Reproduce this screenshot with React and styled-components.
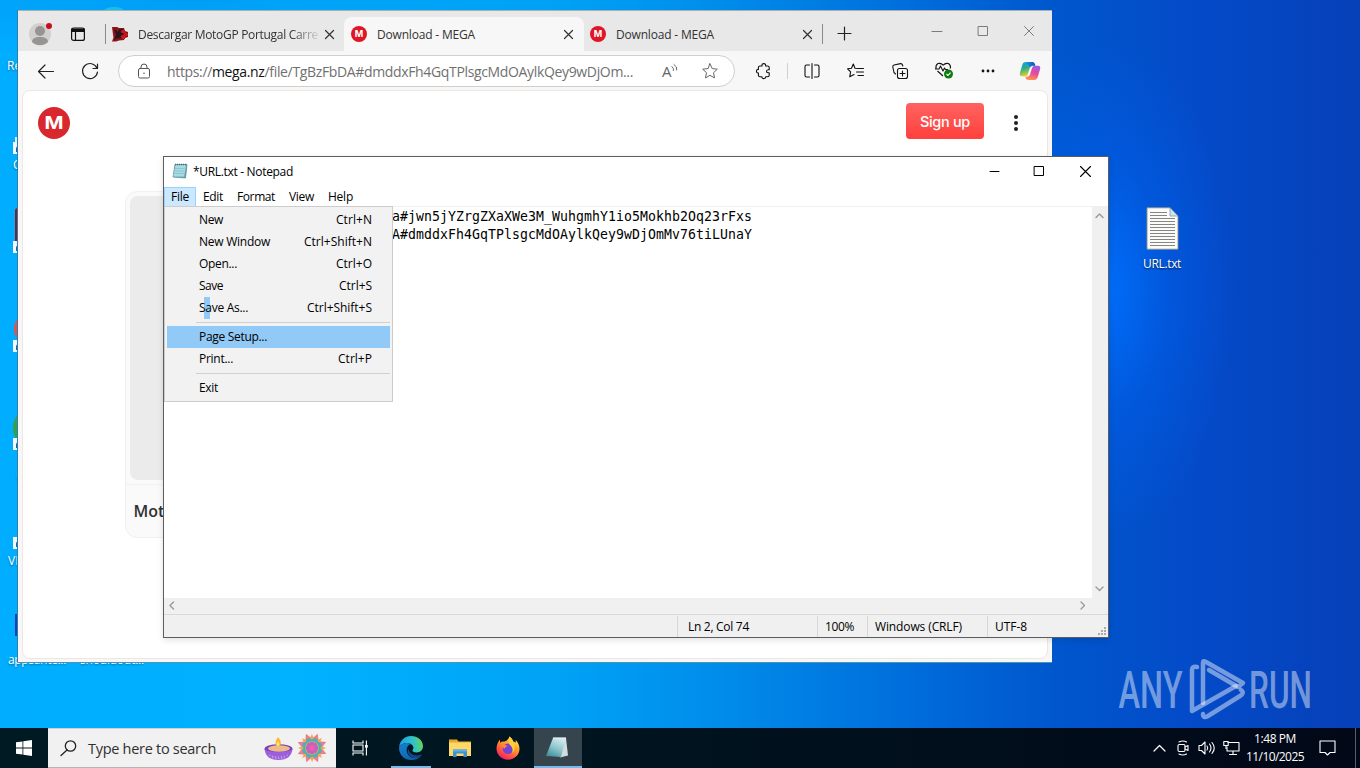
import React, { useLayoutEffect, useRef } from "react";
import styled, { createGlobalStyle, css } from "styled-components";

const Global = createGlobalStyle`
  * { box-sizing: border-box; }
  html, body { margin: 0; padding: 0; overflow: hidden; }
  body { font-family: "Open Sans", "Noto Sans", sans-serif; font-size: 12px; color: #000; }
  svg { display: block; flex: none; overflow: visible; }
`;

/* ---------- text that is tracked to a fixed advance ---------- */
const Run = styled.span`
  display: inline-block;
  white-space: pre;
  flex: none;
`;
function Fit({ w, children, className }) {
  const ref = useRef(null);
  useLayoutEffect(() => {
    const el = ref.current;
    el.style.letterSpacing = "0px";
    const natural = el.getBoundingClientRect().width;
    const gap = (w - natural) / el.textContent.length;
    el.style.letterSpacing = gap.toFixed(3) + "px";
  }, [w]);
  return <Run ref={ref} className={className}>{children}</Run>;
}

/* ---------- desktop ---------- */
const Screen = styled.div`
  position: relative;
  width: 1360px;
  height: 768px;
  overflow: hidden;
  display: flex;
  flex-direction: column;
  justify-content: flex-end;
  background:
    radial-gradient(ellipse 130px 250px at 1105px 290px, rgba(0,112,255,.9), rgba(0,100,245,.4) 50%, rgba(0,90,230,0) 100%),
    radial-gradient(ellipse 420px 60px at 200px 0, rgba(0,140,235,.5), rgba(0,140,235,0)),
    linear-gradient(90deg, #00adff 0, #00b2ff 300px, #00a2f6 560px, #008cea 720px, #006ada 930px, #0056cc 1060px, #044ac8 1200px, #0640b8 1360px);
`;
const Shortcut = styled.div`
  position: absolute;
  left: ${p => p.$x}px;
  top: ${p => p.$y}px;
  color: #fff;
  font-size: 12px;
  line-height: 16px;
  text-shadow: 0 1px 2px rgba(0,0,0,.4);
`;
const Piece = styled.div`
  position: absolute;
  left: ${p => p.$x}px;
  top: ${p => p.$y}px;
  width: ${p => p.$w}px;
  height: ${p => p.$h}px;
  background: ${p => p.$c};
  border-radius: ${p => p.$r || 0}px;
`;
const Badge = styled.div`
  position: absolute;
  left: 13px;
  top: ${p => p.$y}px;
  width: 12px;
  height: 12px;
  background: #f4f8fb;
  &::after { content: ""; position: absolute; left: 3px; top: 4px; width: 6px; height: 6px; background: #285c9c; border-radius: 3px 0 0 0; }
`;
const FileIcon = styled.div`
  position: absolute;
  left: 1125px;
  top: 207px;
  width: 74px;
  display: flex;
  flex-direction: column;
  align-items: center;
  gap: 5px;
  color: #fff;
  line-height: 18px;
  text-shadow: 0 1px 2px rgba(0,0,0,.7);
`;
const Watermark = styled.div`
  position: absolute;
  left: 1115px;
  top: 655px;
`;

/* ---------- browser ---------- */
const Browser = styled.section`
  position: absolute;
  left: 18px;
  top: 10px;
  width: 1034px;
  height: 652px;
  display: flex;
  flex-direction: column;
  background: #f7f7f7;
  border-top: 1px solid #a9b0b5;
  box-shadow: -1px 0 0 #287fb0, 0 1px 0 #4b94b8;
`;
const TabStrip = styled.div`
  display: flex;
  height: 40px;
  background: #e8e8e8;
  flex: none;
  align-items: flex-end;
`;
const StripStart = styled.div`
  width: 89px;
  height: 39px;
  padding: 7px 0 0 10px;
  display: flex;
  gap: 19px;
`;
const Tab = styled.div`
  width: ${p => p.$w}px;
  height: 34px;
  display: flex;
  align-items: center;
  padding: 0 ${p => p.$end || 11}px 0 ${p => p.$pad}px;
  color: #333;
  font-size: 12px;
  border-radius: 8px 8px 0 0;
  background: ${p => (p.$active ? "#f7f7f7" : "transparent")};
`;
const TabTitle = styled.div`
  flex: 1;
  margin-left: ${p => p.$gap}px;
  overflow: hidden;
  white-space: nowrap;
  ${p => p.$fade && css`-webkit-mask-image: linear-gradient(90deg, #000 82%, transparent 98%);`}
`;
const Divider = styled.div`
  width: 1px;
  height: ${p => p.$h}px;
  background: ${p => p.$c};
  flex: none;
  margin: ${p => p.$m || 0};
`;
const Captions = styled.div`
  margin-left: auto;
  height: 39px;
  display: flex;
  padding: 14px 18px 0 0;
  gap: 36px;
`;
const Toolbar = styled.div`
  display: flex;
  align-items: center;
  height: 39px;
  flex: none;
  padding-left: 18px;
`;
const Address = styled.div`
  width: 617px;
  height: 32px;
  margin-left: 18px;
  border: 1px solid #cfcfcf;
  border-radius: 16px;
  background: #fff;
  display: flex;
  align-items: center;
  padding: 0 0 0 17px;
  font-size: 14px;
  color: #707070;
  b { font-weight: 400; color: #111; }
`;
const Url = styled.div`
  width: 495px;
  margin-left: 15px;
  padding-top: 1px;
`;
const Tools = styled.div`
  width: 317px;
  padding-left: 8px;
  display: grid;
  grid-template-columns: 41px 7px 41px 46px 43px 46px 42px 41px;
  align-items: center;
  justify-items: center;
`;
const Page = styled.main`
  flex: 1;
  margin: 0 4px 3px;
  background: #fff;
  border: 1px solid #f0e6e0;
  border-radius: 8px;
  display: flex;
  flex-direction: column;
`;
const PageHeader = styled.header`
  display: flex;
  height: 100px;
  padding: 12px 25px 0 15px;
  justify-content: space-between;
`;
const HeaderActions = styled.div`
  display: flex;
  gap: 24px;
`;
const SignUp = styled.div`
  width: 78px;
  height: 36px;
  border-radius: 4px;
  display: flex;
  align-items: center;
  justify-content: center;
  color: #fff;
  font: 500 14.5px Inter, sans-serif;
  background: linear-gradient(#ff6360, #ff403d);
`;
const Card = styled.div`
  margin-left: 102px;
  width: 400px;
  height: 347px;
  border: 1px solid #f1f1f1;
  border-radius: 12px;
  background: #fafafa;
  overflow: hidden;
`;
const Preview = styled.div`
  height: 293px;
  border-bottom: 1px solid #f1f1f1;
  padding: 4px;
  &::before { content: ""; display: block; height: 284px; background: #ebebeb; border-radius: 8px; }
`;
const CardName = styled.div`
  padding: 15px 0 0 7.5px;
  font-size: 16px;
  font-weight: 600;
  line-height: 22px;
  color: #303233;
`;

/* ---------- notepad ---------- */
const Notepad = styled.section`
  position: absolute;
  left: 163px;
  top: 156px;
  width: 946px;
  height: 482px;
  border: 1px solid #5d5d5d;
  background: #fff;
  display: flex;
  flex-direction: column;
  box-shadow: 0 2px 6px rgba(0,0,0,.12);
`;
const TitleBar = styled.div`
  height: 30px;
  flex: none;
  display: flex;
  align-items: center;
  padding: 0 17.5px 2px 8px;
  gap: 5px;
`;
const TitleButtons = styled.div`
  margin-left: auto;
  display: flex;
  gap: 34.5px;
`;
const MenuBar = styled.div`
  height: 20px;
  flex: none;
  display: flex;
  border-bottom: 1px solid #f0f0f0;
`;
const MenuHead = styled.div`
  padding: 0 7px;
  height: 20px;
  line-height: 20px;
  ${p => p.$open && css`
    background: #cce8ff;
    box-shadow: inset 0 0 0 1px #99d1ff;
  `}
`;
const Editor = styled.div`
  flex: 1;
  display: flex;
`;
const Document = styled.div`
  flex: 1;
  padding: 1px 0 0 228px;
  font-family: "DejaVu Sans Mono", monospace;
  font-size: 13.2px;
  line-height: 18px;
`;
const VScroll = styled.div`
  width: 16px;
  background: #f0f0f0;
  display: flex;
  flex-direction: column;
  justify-content: space-between;
  align-items: center;
  padding: 5px 2px 6px 0;
`;
const HScroll = styled.div`
  height: 16px;
  background: #f0f0f0;
  display: flex;
  align-items: center;
  justify-content: space-between;
  padding: 0 22px 2px 4px;
  flex: none;
`;
const StatusBar = styled.div`
  height: 23px;
  flex: none;
  border-top: 1px solid #d9d9d9;
  background: #f0f0f0;
  display: flex;
  padding-left: 513px;
`;
const StatusCell = styled.div`
  width: ${p => p.$w}px;
  height: 21px;
  margin-top: 1px;
  border-left: 1px solid #d7d7d7;
  padding-left: ${p => p.$pad}px;
  line-height: 20px;
  display: flex;
  justify-content: space-between;
  align-items: flex-end;
`;
const Menu = styled.div`
  position: absolute;
  left: 164px;
  top: 206px;
  width: 229px;
  height: 196px;
  background: #f2f2f2;
  border: 1px solid #ccc;
  padding: 2px;
`;
const MenuItem = styled.div`
  height: 22px;
  display: flex;
  align-items: center;
  justify-content: space-between;
  padding: 0 18px 1px 32px;
  background: ${p =>
    p.$hot ? "#91c9f7" : p.$sliver ? "linear-gradient(90deg, transparent 37px, #91c9f7 37px, #91c9f7 43px, transparent 43px)" : "transparent"};
`;
const Rule = styled.div`
  height: 1px;
  margin: 3px 0 3px 29px;
  background: #d0d0d0;
`;

/* ---------- taskbar ---------- */
const Taskbar = styled.footer`
  position: relative;
  height: 40px;
  flex: none;
  display: flex;
  background: linear-gradient(90deg, #001a24, #00141f 45%, #020818 100%);
  color: #fff;
`;
const Start = styled.div`
  width: 48px;
  display: flex;
  align-items: center;
  justify-content: center;
`;
const Search = styled.div`
  width: 288px;
  background: #f1f1f1;
  border-top: 1px solid #ccd3d7;
  border-bottom: 1px solid #b5b5b5;
  display: flex;
  align-items: center;
  padding-left: 12px;
  color: #303030;
  font-size: 14.5px;
`;
const SearchLabel = styled.div`
  width: 176px;
  margin-left: 11px;
`;
const TaskButton = styled.div`
  width: ${p => p.$w || 49}px;
  display: flex;
  align-items: center;
  justify-content: center;
  padding-right: ${p => p.$nudge || 0}px;
  background:
    ${p => p.$running ? `linear-gradient(#76b9ed, #76b9ed) center bottom / ${p.$active ? 48 : 40}px 2px no-repeat` : "none"}
    ${p => (p.$active ? ", #36454d" : "")};
`;
const Tray = styled.div`
  margin-left: auto;
  display: flex;
  align-items: center;
`;
const TrayIcons = styled.div`
  display: flex;
  align-items: center;
  gap: 7px;
  margin-right: 6px;
`;
const Clock = styled.div`
  width: 58px;
  display: flex;
  flex-direction: column;
  align-items: center;
  line-height: 18px;
`;
const Notify = styled.div`
  width: 52px;
  height: 40px;
  padding-left: 15px;
  display: flex;
  align-items: center;
  border-right: 1px solid #57606a;
  margin-right: 4px;
`;

/* ---------- icons ---------- */
const Line = ({ w = 16, h = w, vb, c = "#222", sw = 1, children }) => (
  <svg width={w} height={h} viewBox={vb || `0 0 ${w} ${h}`} fill="none" stroke={c} strokeWidth={sw} strokeLinecap="round" strokeLinejoin="round">
    {children}
  </svg>
);
const Cross = ({ s = 9, c = "#333", sw = 1.2 }) => (
  <Line w={s} c={c} sw={sw}><path d={`M.5.5l${s - 1} ${s - 1}M${s - 0.5}.5L.5 ${s - 0.5}`} /></Line>
);
const Mega = ({ s, fill }) => (
  <svg width={s} height={s} viewBox="0 0 32 32">
    <circle cx="16" cy="16" r="16" fill={fill} />
    <text x="16" y="22" textAnchor="middle" fontFamily="Inter, sans-serif" fontWeight="700" fontSize="17" textLength="17" lengthAdjust="spacingAndGlyphs" fill="#fff">M</text>
  </svg>
);
const Avatar = () => (
  <svg width="24" height="30" viewBox="0 0 24 30">
    <circle cx="12" cy="15" r="11" fill="#d2d0ce" />
    <circle cx="12" cy="12" r="5" fill="#979593" />
    <path d="M4 23c0-3.500 3-5 8-5s8 1.500 8 5c-1.600 2-4.500 3.200-8 3.200S5.600 25 4 23z" fill="#979593" />
    <circle cx="21" cy="7" r="3" fill="#c50f1f" />
  </svg>
);
const GameFav = () => (
  <svg width="16" height="16" viewBox="0 0 16 16">
    <path d="M0 1h5l2 1h5l1 3 3 1v5l-3 1-1 2-5 .5-3 1H0l1.500-4-.5-3z" fill="#8e1219" />
    <path d="M1.500 2.500L6 6l1-2.500 4.500-.5L9 6.500l4 1.300-4 1.400 1 3.300-4.500-.5L2 14l2.200-5.500z" fill="#241617" />
    <path d="M10 4h3v2.500l3 1v2l-3 1V13h-3l-1.500-3 3-2-3-2z" fill="#c8161c" />
    <path d="M9 7l3.500 1L9 9.500z" fill="#241617" />
  </svg>
);
const Chevron = ({ d, c = "#9a9a9a" }) => {
  const p = { up: "M1 5.500L4.500 2 8 5.500", down: "M1 2l3.500 3.500L8 2", left: "M5.500 1L2 4.500 5.500 8", right: "M2 1l3.500 3.500L2 8" }[d];
  const v = d === "up" || d === "down";
  return <Line w={v ? 9 : 7} h={v ? 7 : 9} c={c} sw={1.4}><path d={p} /></Line>;
};
const NoteIcon = () => (
  <svg width="16" height="16" viewBox="0 0 16 16">
    <path d="M3 1.500h12l-1.500 13.500-12.500-1z" fill="#6fabb7" stroke="#4b7f88" strokeWidth=".7" />
    <path d="M3.500 2h10.500l-2 11.500H1.200z" fill="#a7dbe2" />
    <path d="M3 5.500h9.500M2.600 8h9.500M2.200 10.500h9.500" stroke="#7fbdc8" strokeWidth=".7" />
    <path d="M3 1.500h12" stroke="#52666b" strokeWidth="1.600" strokeDasharray="1 1" />
  </svg>
);
const Copilot = () => (
  <svg width="22" height="20" viewBox="0 0 24 22">
    <defs>
      <linearGradient id="cpA" x1="0" y1="0" x2=".3" y2="1"><stop offset="0" stopColor="#1698e8" /><stop offset=".5" stopColor="#2baf8b" /><stop offset="1" stopColor="#e8cf2e" /></linearGradient>
      <linearGradient id="cpB" x1=".6" y1="0" x2=".3" y2="1"><stop offset="0" stopColor="#9f5ae8" /><stop offset=".5" stopColor="#ea4b93" /><stop offset="1" stopColor="#ff9a50" /></linearGradient>
      <linearGradient id="cpC" x1="0" y1="0" x2="1" y2="0"><stop offset="0" stopColor="#1698e8" /><stop offset="1" stopColor="#1b48b5" /></linearGradient>
    </defs>
    <path d="M7.500 1H14c2 0 2.600 1.500 3.200 3.600h-1.800c-2 0-3 1-3.600 3l-2 6.400c-.6 2-1.600 2.800-3.400 2.800H3.200C.8 16.800.3 15 1 12.600L3.600 4C4.300 1.800 5.500 1 7.500 1z" fill="url(#cpA)" />
    <path d="M16.600 21H10c-2 0-2.600-1.500-3.200-3.600h1.800c2 0 3-1 3.600-3l2-6.400c.6-2 1.600-2.800 3.400-2.800H20.800c2.400 0 2.900 1.800 2.200 4.200L20.400 18c-.7 2.200-1.800 3-3.800 3z" fill="url(#cpB)" />
    <path d="M8 1h6.500c2 0 2.800 1.800 3.500 4.200h-2.600c-1.500 0-2.700.6-3.300 2z" fill="url(#cpC)" />
  </svg>
);
const WinLogo = () => (
  <svg width="16" height="16" viewBox="0 0 16 16" fill="#fff">
    <path d="M0 2.300l6.500-.9v6.100H0zM7.300 1.200L16 0v7.500H7.300zM0 8.400h6.500v6.200L0 13.700zM7.300 8.400H16V16l-8.700-1.200z" />
  </svg>
);
const Diya = () => (
  <svg width="29" height="26" viewBox="0 0 29 26">
    <ellipse cx="14.500" cy="14" rx="14" ry="4.800" fill="#7541b5" />
    <path d="M.5 14c1 7 5 11 14 11s13-4 14-11c-4 4-24 4-28 0z" fill="#9c5fdb" />
    <ellipse cx="15" cy="13.500" rx="11" ry="3.200" fill="#edb98d" />
    <path d="M14 2c4 4.500 3.500 8.500 0 9.500-3.500-1-3-5 0-9.500z" fill="#ffb52b" />
    <path d="M14 6c2 3 1.500 4.500 0 5.500-2-1-1.500-3 0-5.500z" fill="#ffe76a" />
    <path d="M5 20q9 4 19 0M8 22.500q7 2 13 0" stroke="#c596f2" strokeWidth="1.200" strokeDasharray="1.500 1.500" fill="none" />
  </svg>
);
const Rangoli = () => {
  const a = [0, 45, 90, 135, 180, 225, 270, 315];
  return (
    <svg width="32" height="32" viewBox="-16 -16 32 32">
      <g transform="rotate(22)">
        {a.map(r => <path key={r} transform={`rotate(${r})`} d="M0-15.500L4.500-7-4.500-7z" fill="#ee7c90" />)}
        {a.map(r => <path key={r} transform={`rotate(${r + 22.5})`} d="M0-14L3.800-5-3.800-5z" fill="#f6a54b" />)}
        {a.map(r => <circle key={r} transform={`rotate(${r})`} cx="0" cy="-7" r="3.200" fill="#4fb0b4" />)}
        <circle r="6.800" fill="#f0a050" />
        {a.map(r => <circle key={r} transform={`rotate(${r + 22.5})`} cx="0" cy="-4" r="2.200" fill="#b665cc" />)}
        <circle r="3.200" fill="#ef5da8" />
      </g>
    </svg>
  );
};
const TaskView = () => (
  <svg width="16" height="16" viewBox="0 0 16 16" fill="none" stroke="#fff" strokeWidth="1.100">
    <path d="M1 .5v2.500h10V.5M1 15.500V13h10v2.500M1 5h10v6H1zM14.400.5v15" />
    <path d="M13 5h2.800v2.600H13z" fill="#fff" stroke="none" />
  </svg>
);
const EdgeLogo = () => (
  <svg width="24" height="24" viewBox="0 0 24 24">
    <defs>
      <linearGradient id="egA" x1="0" y1=".4" x2="1" y2=".3"><stop offset="0" stopColor="#1e9be0" /><stop offset=".55" stopColor="#2fc0cf" /><stop offset="1" stopColor="#62d85b" /></linearGradient>
      <linearGradient id="egB" x1="0" y1="0" x2="1" y2="1"><stop offset="0" stopColor="#1583d2" /><stop offset="1" stopColor="#0c59a4" /></linearGradient>
    </defs>
    <path d="M.1 11C.8 4.500 6 0 12 0c7 0 12 4.800 12 10.300 0 3.700-2.800 6.200-6.400 6.200-2.800 0-4.200-1-4.200-1.900 0-.7 1-1 1-2.800 0-2.400-2.600-4.900-6.200-4.900C4.400 6.900 1.200 8.600.1 11z" fill="url(#egA)" />
    <path d="M.1 11C1.200 8.600 4.400 6.900 8.200 6.900c1.400 0 2.700.4 3.700 1-2.800.7-4.200 3.200-4.200 6 0 4.700 4 8.200 8.300 8.200 2.300 0 4.200-.8 6.200-2.400C20.200 22.500 16.500 24 12 24 5 24-.6 18 .1 11z" fill="url(#egB)" />
    <path d="M9.300 12.500c-2 5 2.200 9.300 6.700 9.600 2.300 0 4.400-.8 6.200-2.400.8-.8.400-1.500-.7-1-4.800 2-11 0-12.200-6.200z" fill="#114a8b" />
  </svg>
);
const Folder = () => (
  <svg width="22" height="20" viewBox="0 0 22 20">
    <path d="M0 1.500h8l1.500 2H22V18H0z" fill="#e9a927" />
    <path d="M0 4.500h22V18H0z" fill="#ffd868" />
    <path d="M4 11.500h14V19h-3.500v-3.500h-7V19H4z" fill="#3c92d2" />
    <path d="M4 11.500h14v2H4z" fill="#5fb1e8" />
  </svg>
);
const Firefox = () => (
  <svg width="24" height="24" viewBox="0 0 24 24">
    <defs>
      <linearGradient id="ffA" x1=".8" y1="0" x2=".2" y2="1"><stop offset="0" stopColor="#fff14d" /><stop offset=".4" stopColor="#ff9a2b" /><stop offset=".8" stopColor="#ff3c4b" /><stop offset="1" stopColor="#e31587" /></linearGradient>
    </defs>
    <path d="M13.500.5c2 1.700 3.400 3.400 3.900 5.300 1.200-.3 1.900.2 2.600 1l-.4-3c2.400 2.400 3.900 5.700 3.900 9 0 6.200-5 10.900-11.500 10.900C5.600 23.700.5 18.900.5 12.600c0-3.400 1.400-6.700 3.400-9.100l.3 3.200c.8-.9 2-1.300 3.400-1.200C9 5.600 12 4.800 13.500.5z" fill="url(#ffA)" />
    <circle cx="12" cy="12.800" r="5.300" fill="#7542d6" />
    <path d="M6 9.500c2.500-1.800 4.500-.4 5.500 1.100-1.400 0-2.700.7-2.500 1.900-1.700 0-2.400-1.600-3-3z" fill="#ff8a2c" />
    <path d="M17.400 5.800c2.800 4 1.600 9.600-1.700 11.500 1.700-2.700.8-6-1.200-7.800-2.300-2-2.700-5.400-1-9 2 1.700 3.400 3.400 3.900 5.300z" fill="#ffcc3a" />
  </svg>
);
const NoteTask = () => (
  <svg width="24" height="22" viewBox="0 0 24 22">
    <defs><linearGradient id="ntA" x1=".7" y1="0" x2=".2" y2="1"><stop offset="0" stopColor="#d3ecee" /><stop offset=".5" stopColor="#8fc6cd" /><stop offset="1" stopColor="#3d8c99" /></linearGradient></defs>
    <path d="M8 1h13l2 17.500L15 20.500z" fill="#d5dcdd" />
    <path d="M8 1h13l-5 19L1 19z" fill="url(#ntA)" />
    <path d="M8 1h13" stroke="#eef" strokeWidth="1.200" />
  </svg>
);
const Page32 = () => (
  <svg width="33" height="43" viewBox="0 0 33 43">
    <path d="M1 .8h23l8 8.200v33.200H1z" fill="#fbfbf8" stroke="#8d8d86" strokeWidth=".9" />
    <path d="M24 .8V9h8z" fill="#cfe3f3" stroke="#8b98a5" strokeWidth=".8" />
    <path d="M4 5.500h17M4 8.500h17M4 11.500h25M4 14.500h25M4 17.500h25M4 20.500h25M4 23.500h25M4 26.500h25M4 29.500h25M4 32.500h25M4 35.500h25M4 38.500h25" stroke="#858585" strokeWidth="1" />
  </svg>
);

const items = [
  ["New", 24, "Ctrl+N", 36],
  ["New Window", 71, "Ctrl+Shift+N", 68],
  ["Open...", 38, "Ctrl+O", 36],
  ["Save", 24, "Ctrl+S", 33],
  ["Save As...", 49, "Ctrl+Shift+S", 65],
  null,
  ["Page Setup...", 68],
  ["Print...", 34, "Ctrl+P", 34],
  null,
  ["Exit", 19],
];

export default function App() {
  return (
    <>
      <Global />
      <Screen>
        <Piece $x={98} $y={7} $w={32} $h={30} $c="#18bdea" $r={16} />
        <Shortcut $x={7} $y={58}>Re</Shortcut>
        <Shortcut $x={13} $y={157}>C</Shortcut>
        <Shortcut $x={16} $y={468}>u</Shortcut>
        <Shortcut $x={8} $y={553}>VL</Shortcut>
        <Shortcut $x={8} $y={652}><Fit w={58}>appsante...</Fit></Shortcut>
        <Shortcut $x={80} $y={652}><Fit w={64}>shouldout...</Fit></Shortcut>
        <Piece $x={15} $y={137} $w={20} $h={8} $c="#d9eefa" />
        <Piece $x={15} $y={208} $w={30} $h={42} $c="#8c1a22" $r={3} />
        <Piece $x={14} $y={312} $w={34} $h={34} $c="#e8504a" $r={17} />
        <Piece $x={13} $y={408} $w={40} $h={40} $c="#34a046" $r={20} />
        <Piece $x={15} $y={614} $w={30} $h={22} $c="#1d3fae" />
        <Badge $y={142} /><Badge $y={241} /><Badge $y={340} /><Badge $y={438} /><Badge $y={537} />
        <FileIcon><Page32 /><Fit w={38}>URL.txt</Fit></FileIcon>

        <Watermark>
          <svg width="202" height="70" viewBox="0 0 202 70" fill="none">
            <g fill="#fff" fillOpacity=".45" fontFamily="Roboto, sans-serif" fontWeight="500" fontSize="52.500">
              <text x="3.500" y="53" textLength="64" lengthAdjust="spacingAndGlyphs">ANY</text>
              <text x="134" y="53" textLength="63" lengthAdjust="spacingAndGlyphs">RUN</text>
            </g>
            <g stroke="#fff" strokeOpacity=".45" strokeWidth="4.500" strokeLinecap="round" strokeLinejoin="round">
              <path d="M82 12q-5-1-5 3v41l44-25" />
              <path d="M88 48V8q0-3 3-1l37 21-5 4-29-17" />
              <path d="M88 59q0 5 5 2l32-20q5-3 1-6" />
            </g>
          </svg>
        </Watermark>

        <Browser>
          <TabStrip>
            <StripStart>
              <Avatar />
              <Line w={14} h={30} c="#111" sw={1.2}>
                <rect x=".6" y="9" width="12.800" height="12.400" rx="2" />
                <path d="M.8 10h12.400v2.500H.8z" fill="#111" /><path d="M4.500 12v9" />
              </Line>
              <Divider $h={20} $c="#8a8a8a" $m="5px 0 0 1px" />
            </StripStart>
            <Tab $w={237} $pad={5} $end={10}>
              <GameFav />
              <TabTitle $gap={10} $fade><Fit w={180}>Descargar MotoGP Portugal Carre</Fit></TabTitle>
              <Cross />
            </Tab>
            <Tab $w={240} $pad={7} $active>
              <Mega s={16} fill="#e01525" />
              <TabTitle $gap={10}><Fit w={98}>Download - MEGA</Fit></TabTitle>
              <Cross />
            </Tab>
            <Tab $w={238} $pad={6} $end={10}>
              <Mega s={16} fill="#e01525" />
              <TabTitle $gap={10}><Fit w={98}>Download - MEGA</Fit></TabTitle>
              <Cross />
            </Tab>
            <Divider $h={20} $c="#8a8a8a" $m="0 15px 7px 0" />
            <Line w={14} h={34} c="#222" sw={1.2}><path d="M6.500 10v13M0 16.500h13" /></Line>
            <Captions>
              <Line w={10} h={10} c="#7c7c7c"><path d="M0 5.500h10" /></Line>
              <Line w={10} h={10} c="#7c7c7c"><rect x=".5" y=".5" width="9" height="9" /></Line>
              <Cross s={10} c="#7c7c7c" sw={1} />
            </Captions>
          </TabStrip>
          <Toolbar>
            <Line w={18} h={16} c="#222" sw={1.2}><path d="M17.500 8.500H2.500M9 2L2.500 8.500 9 15" /></Line>
            <Line w={46} h={18} c="#222" sw={1.2}><path d="M43 6.200A7.500 7.500 0 1 0 43.500 10M43.500 2v4.500H39" /></Line>
            <Address>
              <Line w={16} c="#555"><rect x="2.500" y="5.500" width="11" height="9.500" rx="1.500" /><path d="M5 5.500V4a3 3 0 0 1 6 0v1.500" /><circle cx="8" cy="10.300" r=".8" fill="#555" stroke="none" /></Line>
              <Url><Fit w={466}>https://<b>mega.nz</b>/file/TgBzFbDA#dmddxFh4GqTPlsgcMdOAylkQey9wDjOm...</Fit></Url>
              <Line w={16} c="#666"><text x="0" y="13.500" fontFamily="Open Sans, sans-serif" fontSize="15" fill="#666" stroke="none">A</text><path d="M10 3.500q2 1.500 1.500 4M12 1.500q3.500 2 2.800 5.500" /></Line>
              <Line w={40} h={16} c="#666"><path d="M32 .8l2.200 4.800 5.100.6-3.800 3.500 1 5.200-4.500-2.600-4.500 2.600 1-5.200-3.800-3.500 5.100-.6z" /></Line>
            </Address>
            <Tools>
              <Line w={16} c="#111" sw={1.1}><path d="M4 3h2q-.2-2.400 1.800-2.400T9.600 3h2q1.600 0 1.600 1.600v2.200h-1q-1.700.2-1.700 1.500t1.700 1.500h1v2.400q0 1.600-1.600 1.600H9.700q0 1.800-1.900 1.800T5.900 13.800H4q-1.600 0-1.600-1.600V10.100Q.4 10 .4 8.200T2.400 6.400V4.600Q2.400 3 4 3z" /></Line>
              <Divider $h={16} $c="#cfcfcf" />
              <Line w={16} c="#111" sw={1.1}><path d="M8 .5v15M5.500 2H2.500Q1 2 1 3.500v9Q1 14 2.500 14h3M10.500 2h3Q15 2 15 3.500v9q0 1.500-1.500 1.500h-3" /></Line>
              <Line w={17} h={16} c="#111" sw={1.1}><path d="M11 5.500l-3-.3L6.300 1 4.500 5.200.6 5.800l3 3-.9 5 4.300-2.300M10.500 5.500h6M9.500 9h7M11 12.500h5.500" /></Line>
              <Line w={16} c="#111" sw={1.1}><rect x="5.500" y="5.500" width="10" height="10" rx="2" /><path d="M10.500 8v5M8 10.500h5M3.500 11L2 9.500.8 4Q.5 2.500 2 2L8.500.6Q10 .4 10.500 2l.3 1" /></Line>
              <svg width="18" height="17" viewBox="0 0 18 17" fill="none" stroke="#111" strokeWidth="1.100" strokeLinejoin="round">
                <path d="M8 14L2.500 9M1 6.500Q.4 3 3 1.600 6 .6 8.200 3.200 10.500.6 13.400 1.600 16 3 15.400 6.500M0 7h4l1.500-3L8 9l1.500-3 1 1.500H13" />
                <circle cx="13.500" cy="12" r="4.500" fill="#107c10" stroke="none" /><path d="M11.500 12l1.500 1.500 2.600-2.800" stroke="#fff" />
              </svg>
              <svg width="14" height="4" viewBox="0 0 14 4" fill="#111"><circle cx="2" cy="2" r="1.400" /><circle cx="7" cy="2" r="1.400" /><circle cx="12" cy="2" r="1.400" /></svg>
              <Copilot />
            </Tools>
          </Toolbar>
          <Page>
            <PageHeader>
              <svg width="32" height="40" viewBox="0 -4 32 40">
                <circle cx="16" cy="16" r="16" fill="#d9272e" />
                <text x="16" y="22" textAnchor="middle" fontFamily="Inter, sans-serif" fontWeight="700" fontSize="17.500" textLength="19" lengthAdjust="spacingAndGlyphs" fill="#fff">M</text>
              </svg>
              <HeaderActions>
                <SignUp><Fit w={50}>Sign up</Fit></SignUp>
                <svg width="14" height="40" viewBox="0 0 14 40" fill="#222"><circle cx="8" cy="14" r="2" /><circle cx="8" cy="20" r="2" /><circle cx="8" cy="26" r="2" /></svg>
              </HeaderActions>
            </PageHeader>
            <Card><Preview /><CardName>Mot</CardName></Card>
          </Page>
        </Browser>

        <Notepad>
          <TitleBar>
            <NoteIcon /><Fit w={100}>*URL.txt - Notepad</Fit>
            <TitleButtons>
              <Line w={11} c="#000"><path d="M1 5.500h9" /></Line>
              <Line w={11} c="#000"><rect x=".5" y=".5" width="9" height="9" /></Line>
              <Cross s={11} c="#000" sw={1.1} />
            </TitleButtons>
          </TitleBar>
          <MenuBar>
            <MenuHead $open><Fit w={18}>File</Fit></MenuHead>
            <MenuHead><Fit w={20}>Edit</Fit></MenuHead>
            <MenuHead><Fit w={38}>Format</Fit></MenuHead>
            <MenuHead><Fit w={25}>View</Fit></MenuHead>
            <MenuHead><Fit w={25}>Help</Fit></MenuHead>
          </MenuBar>
          <Editor>
            <Document>
              <div><Fit w={360}>a#jwn5jYZrgZXaXWe3M_WuhgmhY1io5Mokhb2Oq23rFxs</Fit></div>
              <div><Fit w={360}>A#dmddxFh4GqTPlsgcMdOAylkQey9wDjOmMv76tiLUnaY</Fit></div>
            </Document>
            <VScroll><Chevron d="up" /><Chevron d="down" /></VScroll>
          </Editor>
          <HScroll><Chevron d="left" /><Chevron d="right" /></HScroll>
          <StatusBar>
            <StatusCell $w={140} $pad={10}><Fit w={61}>Ln 2, Col 74</Fit></StatusCell>
            <StatusCell $w={50} $pad={7}><Fit w={29}>100%</Fit></StatusCell>
            <StatusCell $w={120} $pad={7}><Fit w={87}>Windows (CRLF)</Fit></StatusCell>
            <StatusCell $w={121} $pad={7}>
              <Fit w={32}>UTF-8</Fit>
              <svg width="10" height="10" viewBox="0 0 10 10" fill="#aaa"><path d="M6 0h2v2H6zM3 3h2v2H3zM6 3h2v2H6zM0 6h2v2H0zM3 6h2v2H3zM6 6h2v2H6z" /></svg>
            </StatusCell>
          </StatusBar>
        </Notepad>

        <Menu>
          {items.map((it, i) =>
            it ? (
              <MenuItem key={i} $hot={it[0] === "Page Setup..."} $sliver={it[0] === "Save As..."}>
                <Fit w={it[1]}>{it[0]}</Fit>
                {it[2] && <Fit w={it[3]}>{it[2]}</Fit>}
              </MenuItem>
            ) : (
              <Rule key={i} />
            )
          )}
        </Menu>

        <Taskbar>
          <Start><WinLogo /></Start>
          <Search>
            <Line w={17} c="#222" sw={1.3}><circle cx="10.500" cy="6" r="5.200" /><path d="M7 10L1 15.500" /></Line>
            <SearchLabel><Fit w={128}>Type here to search</Fit></SearchLabel>
            <Diya />
            <Divider $h={1} $c="transparent" $m="0 1px" />
            <Rangoli />
          </Search>
          <TaskButton $w={48}><TaskView /></TaskButton>
          <TaskButton $w={54} $running><EdgeLogo /></TaskButton>
          <TaskButton $w={43}><Folder /></TaskButton>
          <TaskButton $w={53}><Firefox /></TaskButton>
          <TaskButton $w={48} $nudge={3} $running $active><NoteTask /></TaskButton>
          <Tray>
            <TrayIcons>
              <Line w={14} h={8} c="#fff" sw={1.2}><path d="M0 7L5.500 1.500 11 7" /></Line>
              <Line w={16} c="#fff" sw={1.1}><rect x="3" y="4.500" width="7" height="7" rx="1.200" /><path d="M10 7l3-1.500v5L10 9M4 2q4-2 7.500 0M4 14q4 2 7.500 0" /></Line>
              <Line w={18} h={16} c="#fff" sw={1.1}><path d="M1 5.500h2.500L7 2v12l-3.500-3.500H1zM9 6q1.500 2 0 4M11.500 4q3 4 0 8M14 2.500q4.500 5.500 0 11" /></Line>
              <Line w={17} h={16} c="#fff" sw={1.1}><path d="M5 2.500h11v8.500H4V7M10 11v3M6.500 14.500h7" /><path d="M.8 1.500h4.400v4H.8zM3 5.500v3" /></Line>
            </TrayIcons>
            <Clock><Fit w={42}>1:48 PM</Fit><Fit w={58}>11/10/2025</Fit></Clock>
            <Notify><Line w={17} h={18} c="#fff" sw={1.1}><path d="M1 2h15v11.500h-5L8.500 16 6 13.500H1z" /></Line></Notify>
          </Tray>
        </Taskbar>
      </Screen>
    </>
  );
}
